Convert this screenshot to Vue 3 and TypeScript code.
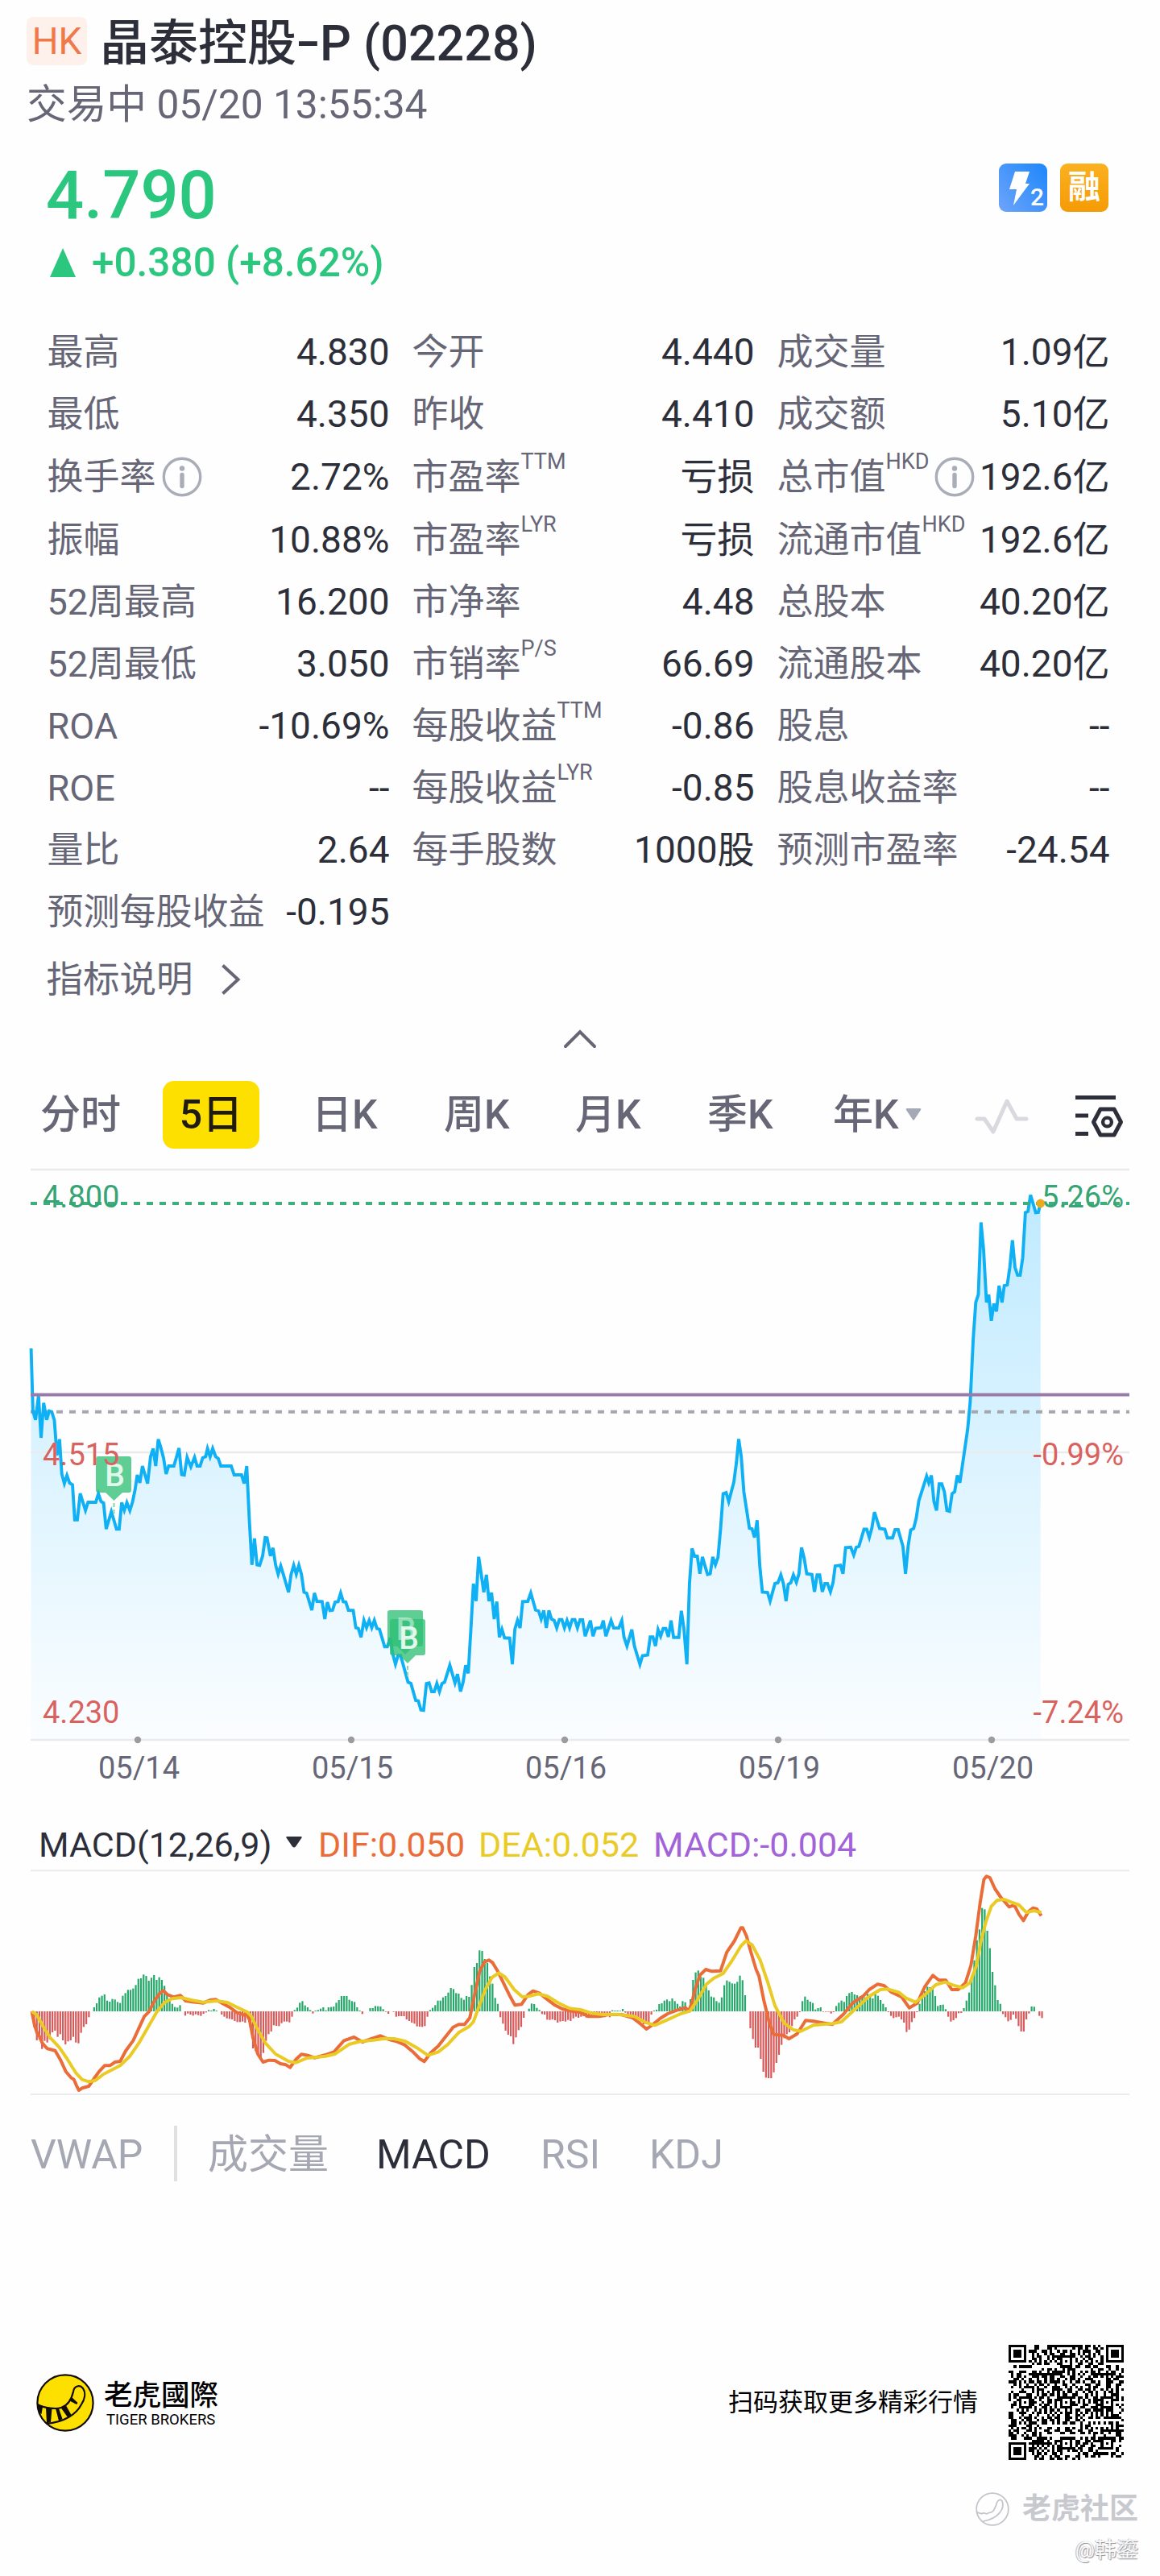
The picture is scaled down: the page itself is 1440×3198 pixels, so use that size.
<script setup lang="ts">
interface Stat { label: string; value: string; sup?: string; info?: boolean }

const stats: Stat[] = [
  { label: '最高', value: '4.830' }, { label: '今开', value: '4.440' }, { label: '成交量', value: '1.09亿' },
  { label: '最低', value: '4.350' }, { label: '昨收', value: '4.410' }, { label: '成交额', value: '5.10亿' },
  { label: '换手率', value: '2.72%', info: true }, { label: '市盈率', sup: 'TTM', value: '亏损' }, { label: '总市值', sup: 'HKD', info: true, value: '192.6亿' },
  { label: '振幅', value: '10.88%' }, { label: '市盈率', sup: 'LYR', value: '亏损' }, { label: '流通市值', sup: 'HKD', value: '192.6亿' },
  { label: '52周最高', value: '16.200' }, { label: '市净率', value: '4.48' }, { label: '总股本', value: '40.20亿' },
  { label: '52周最低', value: '3.050' }, { label: '市销率', sup: 'P/S', value: '66.69' }, { label: '流通股本', value: '40.20亿' },
  { label: 'ROA', value: '-10.69%' }, { label: '每股收益', sup: 'TTM', value: '-0.86' }, { label: '股息', value: '--' },
  { label: 'ROE', value: '--' }, { label: '每股收益', sup: 'LYR', value: '-0.85' }, { label: '股息收益率', value: '--' },
  { label: '量比', value: '2.64' }, { label: '每手股数', value: '1000股' }, { label: '预测市盈率', value: '-24.54' },
  { label: '预测每股收益', value: '-0.195' },
]

/* Intraday price series, split at the middle of the five-day window */
const firstHalf = '84,-258 89,-25 96,8 104,-82 111,75 118,-55 126,8 133,-25 140,-22 147,10 154,140 161,80 167,210 174,245 181,215 188,243 196,250 202,380 209,380 217,282 224,315 231,345 238,315 259,315 266,283 273,312 280,318 287,415 301,350 308,382 315,415 322,415 329,316 336,345 343,316 351,346 358,315 365,270 371,213 378,243 385,180 392,212 399,245 407,145 414,115 421,180 428,80 435,112 442,150 449,210 456,180 470,180 477,148 484,113 491,212 498,214 506,148 516,183 526,148 533,180 541,180 548,150 556,145 561,115 568,145 575,115 583,145 590,152 597,180 625,180 633,213 653,213 660,245 667,180 674,380 681,548 688,450 695,548 702,550 710,515 717,447 722,448 731,515 738,485 745,548 752,583 759,552 766,583 780,650 787,583 794,550 801,583 808,550 815,583 822,650 829,654 843,717 850,653 857,684 871,685 878,750 885,687 892,718 899,717 906,687 914,685 921,653 928,685 935,687 942,717 955,718 962,782 969,785 976,818 984,755 991,782 998,755 1005,782 1012,755 1019,785 1026,788 1040,853 1047,853 1055,820 1062,880 1069,918 1076,886 1083,886 1103,985 1111,990 1124,1053 1131,1055 1138,1088 1145,1090 1153,990 1160,988 1167,1020 1174,1020 1181,990 1188,1020 1195,990 1202,985 1216,922 1230,988 1237,955 1245,1020 1252,985 1259,922 1266,952 1273,790 1280,618 1287,683 1294,518 1301,583 1308,650 1315,585 1322,683 1329,652 1336,750 1343,685 1350,818 1357,788 1364,820 1378,821 1385,918 1392,787 1399,755 1406,783 1413,685 1427,684 1435,653 1448,716 1456,720 1463,750 1470,718 1477,783 1484,718 1491,750 1498,755 1505,783 1512,752 1519,752 1526,783 1533,755 1540,783 1547,752 1554,752 1561,783'
const secondHalf = '0,1178 7,1178 14,1220 28,1180 35,1220 42,1200 57,1198 63,1180 70,1220 84,1180 91,1199 105,1199 113,1180 119,1222 127,1245 140,1203 147,1245 162,1292 169,1270 183,1268 190,1222 197,1222 204,1245 211,1203 218,1220 225,1200 232,1200 239,1222 246,1180 253,1223 267,1223 274,1155 281,1200 289,1292 296,1085 303,995 310,1015 317,1015 324,1060 331,1017 338,1040 345,1062 352,1060 359,1017 366,1037 373,1018 380,945 387,855 395,852 402,875 409,850 416,825 423,775 429,715 436,760 443,850 458,943 465,945 472,967 479,923 486,1040 493,1107 507,1108 514,1130 527,1085 535,1083 543,1063 550,1085 557,1130 563,1087 570,1083 577,1063 585,1082 592,1060 599,993 606,1020 613,1060 627,1062 634,1106 641,1063 648,1063 655,1106 662,1085 669,1085 677,1106 684,1083 690,1040 704,1038 711,1060 718,993 732,992 740,1012 747,992 754,990 768,946 775,946 782,967 789,943 796,902 810,944 824,946 831,968 845,968 852,947 860,947 873,990 880,1060 887,990 894,948 902,944 909,917 916,873 937,810 943,827 950,808 957,875 964,898 971,830 978,830 985,850 992,898 999,900 1006,855 1013,850 1020,808 1027,827 1048,690 1055,620 1063,460 1070,365 1077,345 1084,160 1091,230 1099,365 1105,345 1112,412 1119,368 1126,388 1133,322 1141,365 1147,322 1155,320 1162,275 1169,206 1176,275 1183,295 1190,295 1197,250 1204,135 1211,132 1218,90 1225,112 1232,135 1239,134 1245,112'

type Pt = [number, number]
const parse = (s: string): Pt[] => s.split(' ').map((p) => p.split(',').map(Number) as Pt)
const UX = 2.1778
const pricePts: Pt[] = [
  ...parse(firstHalf).map(([x, y]): Pt => [x / UX, 1760 + y / 3]),
  ...parse(secondHalf).map(([x, y]): Pt => [720 + x / UX, 1440 + y / 2.0632]),
]
const fmt = (pts: Pt[]) => pts.map(([x, y]) => `${x.toFixed(1)},${y.toFixed(1)}`).join(' ')
const priceLine = fmt(pricePts)
const last = pricePts[pricePts.length - 1]
const priceArea = `38.5,2160 ${priceLine} ${last[0].toFixed(1)},2160`

const days = [['05/14', 171], ['05/15', 436], ['05/16', 701], ['05/19', 966], ['05/20', 1231]] as [string, number][]

/* MACD histogram, one entry per sample */
const hist = [
  0, -60, -108, -105, -140, -110, -116, -105, -78, -72, -95, -85, -108, -123, -112, -108, -95, -116, -119, -80, -58, -48, -22, 0, 15, 30, 52, 58, 63, 40,
  36, 46, 44, 35, 31, 58, 68, 80, 80, 85, 98, 121, 123, 137, 132, 114, 125, 135, 117, 127, 117, 95, 68, 45, 28, 16, 14, 23, 0, -16,
  -8, -12, -16, -11, -14, -17, -9, -4, 5, 3, 9, 3, 0, -12, -20, -26, -28, -30, -36, -40, -40, -38, -42, -25, -60, -138, -148, -165, -180, -155,
  -110, -85, -75, -52, -54, -55, -44, -38, -38, -41, -20, 5, 14, 32, 38, 22, 15, 5, -8, 3, 5, 10, 15, 4, 15, 16, 18, 32, 42, 57,
  57, 57, 43, 38, 35, 15, 3, -10, 0, 0, 12, 12, 20, 19, 18, 8, -2, -9, 0, -2, -20, -18, -18, -18, -30, -36, -42, -46, -56, -57,
  -58, -55, -20, 5, 13, 23, 40, 40, 52, 57, 70, 87, 83, 68, 66, 50, 43, 57, 54, 98, 165, 180, 227, 225, 195, 180, 130, 103, 50, 28,
  -22, -46, -72, -87, -93, -122, -97, -70, -58, -24, 0, 10, 29, 27, 13, 5, -10, -12, -31, -32, -30, -33, -42, -38, -36, -38, -32, -36, -26, -20,
  -24, -20, -18, -23, -20, -22, -22, -20, -18, -22, -22, -18, -22, 4, 3, 3, 2, 9, -5, -12, -15, -24, -28, -32, -38, -48, -48, -42, -12, 3,
  6, 27, 30, 40, 44, 38, 48, 38, 28, 18, 38, 34, 10, 45, 117, 145, 152, 128, 125, 100, 78, 55, 52, 38, 32, 52, 97, 115, 110, 104,
  103, 110, 133, 116, 60, 0, -63, -103, -135, -135, -177, -225, -247, -249, -249, -227, -192, -162, -125, -100, -85, -78, -55, -30, -20, -3, 38, 55, 43, 36,
  31, 7, 12, 15, -2, -2, -2, -8, -3, 20, 32, 40, 35, 57, 68, 72, 63, 60, 55, 60, 52, 65, 57, 48, 65, 58, 42, 28, 15, -3,
  -17, -25, -22, -20, -30, -42, -77, -68, -40, -25, -3, 28, 50, 75, 92, 90, 88, 57, 20, 24, 25, 8, -20, -38, -33, -25, -7, -6, 12, 40,
  70, 120, 190, 265, 305, 385, 380, 300, 235, 147, 97, 42, 28, -10, -22, -37, -32, -12, -27, -55, -75, -75, -30, -8, 18, 17, 0, -17, -25,
]
const bars = hist
  .map((v, i) => ({ x: (85.5 + 7.04 * i) / UX - 1.1, y: v > 0 ? 2497 - v / 3 : 2497, h: Math.abs(v) / 3, up: v > 0 }))
  .filter((b) => b.h > 0)

const difPts = '86,771 93,820 100,850 107,865 114,888 121,900 128,910 149,917 163,950 178,995 192,1018 200,1025 206,1045 213,1065 222,1057 240,1050 255,1020 268,995 283,973 297,973 311,960 325,957 340,918 360,880 375,835 390,790 403,772 417,733 431,705 442,694 452,708 470,718 488,712 502,732 520,736 550,740 568,729 583,727 600,740 620,755 640,775 660,785 667,780 675,805 684,870 697,930 711,960 727,953 743,954 758,966 773,970 784,980 800,950 815,931 832,935 850,944 878,934 903,922 930,880 957,867 980,885 1000,875 1028,862 1050,875 1070,882 1093,895 1115,920 1135,948 1147,958 1165,925 1185,900 1205,865 1225,830 1240,820 1256,820 1270,795 1283,710 1297,620 1310,587 1322,580 1332,590 1347,625 1362,668 1377,710 1392,748 1410,745 1427,710 1441,695 1458,703 1475,722 1500,748 1520,762 1545,770 1570,775 1590,790 1620,790 1645,783 1680,783 1710,795 1732,818 1748,837 1765,820 1785,797 1805,780 1830,767 1853,757 1862,770 1870,740 1880,685 1893,635 1908,615 1925,622 1948,620 1965,550 1985,510 2003,460 2008,460 2018,490 2030,550 2044,615 2052,640 2065,730 2080,815 2092,857 2118,860 2133,873 2155,855 2178,805 2200,808 2220,813 2250,820 2268,797 2280,782 2305,740 2333,715 2350,690 2372,670 2390,675 2410,700 2438,718 2458,758 2480,740 2500,680 2522,637 2538,655 2557,655 2573,690 2590,690 2610,665 2625,600 2638,490 2650,365 2660,280 2667,268 2676,273 2690,315 2705,345 2728,382 2742,375 2755,410 2767,433 2780,400 2793,386 2803,390 2815,415'
const deaPts = '86,771 100,785 118,830 135,868 160,905 180,945 205,1000 222,1025 240,1033 258,1028 280,1005 325,973 350,940 375,890 400,830 425,770 445,738 465,724 490,720 520,730 550,737 585,732 615,738 640,755 668,773 680,790 695,835 718,890 745,930 780,957 800,962 830,945 880,938 905,930 945,893 975,883 1010,878 1040,872 1065,873 1095,882 1125,905 1157,935 1185,922 1210,895 1240,850 1268,828 1280,810 1297,745 1312,690 1330,645 1348,628 1365,643 1390,690 1412,717 1430,715 1455,706 1480,715 1510,740 1540,760 1570,765 1600,778 1630,783 1670,782 1715,790 1745,812 1770,823 1800,805 1840,780 1865,770 1885,730 1910,670 1930,647 1955,630 1980,580 2003,528 2017,508 2033,523 2055,580 2075,660 2095,750 2120,815 2145,840 2165,845 2200,822 2250,817 2275,810 2310,765 2350,715 2380,690 2400,688 2430,700 2450,722 2475,737 2500,710 2530,672 2555,662 2580,675 2603,683 2622,665 2640,600 2652,510 2665,440 2680,380 2695,358 2715,354 2735,365 2755,375 2775,403 2795,396 2815,403'
const macdPath = (s: string) => fmt(parse(s).map(([x, y]): Pt => [x / UX, 2240 + y / 3]))
const dif = macdPath(difPts)
const dea = macdPath(deaPts)

/* QR symbol: 45 modules with finder, alignment and timing patterns */
const N = 45
const qr: boolean[][] = []
let seed = 20228
const rnd = () => { seed = (seed * 1103515245 + 12345) & 0x7fffffff; return (seed >> 12) & 1 }
for (let r = 0; r < N; r++) {
  qr.push([])
  for (let c = 0; c < N; c++) qr[r].push(r === 6 || c === 6 ? (r + c) % 2 === 0 : rnd() === 1)
}
const ring = (cr: number, cc: number, rad: number, light: number) => {
  for (let r = -rad; r <= rad; r++) for (let c = -rad; c <= rad; c++) {
    const row = cr + r, col = cc + c
    if (row < 0 || col < 0 || row >= N || col >= N) continue
    const d = Math.max(Math.abs(r), Math.abs(c))
    qr[row][col] = d !== light && d !== 4
  }
}
for (const [r, c] of [[6, 22], [22, 6], [22, 22], [22, 38], [38, 22], [38, 38]]) ring(r, c, 2, 1)
for (const [r, c] of [[3, 3], [3, 41], [41, 3]]) ring(r, c, 4, 2)
const qrPath = qr.map((row, r) => row.map((on, c) => (on ? `M${c} ${r}h1v1h-1z` : '')).join('')).join('')
</script>

<template>
  <main class="page">
    <header class="head">
      <div class="title-row"><span class="market">HK</span><h1>晶泰控股<span class="dash">-</span>P (02228)</h1></div>
      <p class="status">交易中 05/20 13:55:34</p>
    </header>

    <section class="quote">
      <div>
        <div class="price">4.790</div>
        <div class="change">
          <svg width="32" height="36" viewBox="0 0 32 36"><path d="M16 0L32 36H0z" fill="#2bc77f" /></svg>
          <span>+0.380 (+8.62%)</span>
        </div>
      </div>
      <div class="tags">
        <svg width="60" height="60" viewBox="0 0 60 60">
          <defs>
            <linearGradient id="lv" x1="0" y1="1" x2="1" y2="0.2"><stop offset="0" stop-color="#6ea4fb" /><stop offset="1" stop-color="#2489fb" /></linearGradient>
          </defs>
          <rect width="60" height="60" rx="9" fill="url(#lv)" />
          <path d="M20 10h18l-5 15h5L18 52l4-20h-9z" fill="#fff" />
          <text x="39" y="52" font-size="30" font-weight="500" fill="#fff">2</text>
        </svg>
        <span class="margin-tag">融</span>
      </div>
    </section>

    <section class="stats">
      <div v-for="(s, i) in stats" :key="i" class="stat">
        <span class="label">{{ s.label }}<span v-if="s.sup" class="sup">{{ s.sup }}</span></span>
        <svg v-if="s.info" class="info" width="50" height="50" viewBox="0 0 50 50">
          <circle cx="25" cy="25" r="22.7" fill="none" stroke="#a9adb8" stroke-width="3.4" />
          <circle cx="25" cy="14.5" r="3.2" fill="#a9adb8" />
          <path d="M25 22.5v14" stroke="#a9adb8" stroke-width="5.4" stroke-linecap="round" />
        </svg>
        <span class="value">{{ s.value }}</span>
      </div>
    </section>

    <div class="explain">
      <span>指标说明</span>
      <svg width="26" height="40" viewBox="0 0 26 40"><path d="M2.5 2.5L21.5 20L2.5 37.5" fill="none" stroke="#666677" stroke-width="4" /></svg>
    </div>
    <div class="fold">
      <svg width="44" height="26" viewBox="0 0 44 26"><path d="M4 22L22 4L40 22" fill="none" stroke="#666677" stroke-width="4" stroke-linecap="round" /></svg>
    </div>

    <nav class="periods">
      <span>分时</span>
      <span class="active">5日</span>
      <span>日K</span>
      <span>周K</span>
      <span>月K</span>
      <span>季K</span>
      <span class="year">年K<svg width="20" height="15" viewBox="0 0 20 15"><path d="M2 0h16q2 0 1 2l-8 12q-1 1-2 0l-8-12q-1-2 1-2z" fill="#a5a8b5" /></svg></span>
      <svg width="72" height="52" viewBox="0 0 72 52"><path d="M5 31H14L25 47L42 9L54 31H66" fill="none" stroke="#d9dadf" stroke-width="5" stroke-linecap="round" stroke-linejoin="round" /></svg>
      <svg class="tune" width="62" height="56" viewBox="0 0 62 56" fill="none" stroke="#2c2e3a" stroke-width="5">
        <path d="M1 4.6H51M1 27H17M1 49.6H17" />
        <path d="M32 19H49L57.5 35L49 51H32L23.5 35z" stroke-linejoin="round" />
        <circle cx="40.5" cy="35" r="5.4" stroke-width="4.4" />
      </svg>
    </nav>

    <svg class="chart" width="1440" height="780" viewBox="0 1450 1440 780">
      <defs>
        <linearGradient id="area" gradientUnits="userSpaceOnUse" x1="0" y1="1480" x2="0" y2="2160">
          <stop offset="0" stop-color="#bfeaff" /><stop offset="1" stop-color="#fafdff" />
        </linearGradient>
      </defs>
      <polygon :points="priceArea" fill="url(#area)" />
      <g stroke="#ebebed" stroke-width="2.4"><path d="M38 1452H1402M38 1803H1402M38 2160H1402" /></g>
      <path d="M38 1752.7H1402" stroke="#a6a6ae" stroke-width="4" stroke-dasharray="8 8" />
      <polyline :points="priceLine" fill="none" stroke="#0fb1f4" stroke-width="3.9" />
      <path d="M38 1494H1402" stroke="#3fae7d" stroke-width="4" stroke-dasharray="8 8" />
      <path d="M38 1731.4H1402" stroke="#987ba9" stroke-width="4" />
      <circle :cx="last[0]" cy="1494" r="5.4" fill="#e9ab1c" />
      <g fill="#2dbf74" fill-opacity=".76">
        <path d="M122 1808h38q3 0 3 3v39q0 3-3 3h-8l-10.500 10-10.500-10h-9q-3 0-3-3v-39q0-3 3-3z" />
        <path d="M484 1999h38q3 0 3 3v39q0 3-3 3h-9l-10 10-10-10h-9q-3 0-3-3v-39q0-3 3-3z" />
        <path d="M487 2010h38q3 0 3 3v39q0 3-3 3h-9l-10 10-10-10h-9q-3 0-3-3v-39q0-3 3-3z" />
      </g>
      <path d="M141.500 1866v14M506 2068v14" stroke="#7fd6a6" stroke-width="2" stroke-dasharray="5 3" />
      <g class="flag" text-anchor="middle">
        <text x="142.500" y="1845">B</text>
        <text x="504" y="2036" fill-opacity=".55">B</text>
        <text x="507.500" y="2047">B</text>
      </g>
      <g class="axis">
        <text x="53" y="1499" class="up">4.800</text>
        <text x="53" y="1819" class="down">4.515</text>
        <text x="53" y="2139" class="down">4.230</text>
        <g text-anchor="end">
          <text x="1395" y="1499" class="up">5.26%</text>
          <text x="1395" y="1819" class="down">-0.99%</text>
          <text x="1395" y="2139" class="down">-7.24%</text>
        </g>
        <g v-for="d in days" :key="d[0]" text-anchor="middle">
          <circle :cx="d[1]" cy="2160" r="4.200" fill="#9c9c9c" />
          <text :x="d[1] + 1.500" y="2208" class="day">{{ d[0] }}</text>
        </g>
      </g>
    </svg>

    <div class="legend">
      <span>MACD(12,26,9)</span>
      <svg width="20" height="14" viewBox="0 0 20 14"><path d="M1 0h18q1 0 0.500 1.500L12 12.500q-2 2-4 0L0.500 1.500Q0 0 1 0z" fill="#2c2e3a" /></svg>
      <span class="dif">DIF:0.050</span>
      <span class="dea">DEA:0.052</span>
      <span class="macd">MACD:-0.004</span>
    </div>

    <svg class="chart" width="1440" height="282" viewBox="0 2320 1440 282">
      <path d="M38 2322.300H1402M38 2600H1402" stroke="#ebebed" stroke-width="2" />
      <rect v-for="(b, i) in bars" :key="i" :x="b.x" :y="b.y" width="2.200" :height="b.h" :fill="b.up ? '#25a86a' : '#d95a5a'" />
      <g fill="none" stroke-width="4" stroke-linejoin="round">
        <polyline :points="dif" stroke="#ea6c38" />
        <polyline :points="dea" stroke="#eacb25" />
      </g>
    </svg>

    <nav class="indicators">
      <span>VWAP</span>
      <i class="bar"></i>
      <span>成交量</span>
      <span class="on">MACD</span>
      <span>RSI</span>
      <span>KDJ</span>
    </nav>

    <footer class="foot">
      <svg width="72" height="72" viewBox="0 0 72 72">
        <circle cx="36" cy="36" r="34.600" fill="#fee000" stroke="#120c08" stroke-width="2.200" />
        <path d="M1.500 38C10 43 25 44 31 42C40 39 44 31 46 22C47 15 54 13 58 18C62 24 60 32 56 38C50 50 35 60 12.500 62" fill="none" stroke="#120c08" stroke-width="2.200" />
        <path d="M1.500 38L8 41L6.500 50L3 48zM12 42L19.500 43L18 60L13 61.500zM24 43L28 43L32.500 56L28 58.500zM30.500 42L36.500 38.500L43.500 51L39 54zM40.500 33L43.500 28.500L51.500 36L50 38z" fill="#120c08" />
      </svg>
      <div class="brand"><div class="cn">老虎國際</div><div class="en">TIGER BROKERS</div></div>
      <p>扫码获取更多精彩行情</p>
      <svg width="143" height="143" viewBox="0 0 45 45" shape-rendering="crispEdges"><path :d="qrPath" fill="#000" /></svg>
    </footer>

    <div class="watermark">
      <div class="community">
        <svg width="42" height="42" viewBox="0 0 72 72" fill="none" stroke="#c3c4c9" stroke-width="3">
          <circle cx="36" cy="36" r="34" />
          <path d="M3 42C8 46 10 44 13 46C18 42 22 46 24 46C29 42 33 44 35 42C42 38 40 32 43 30C46 15 54 13 57 20C62 34 50 56 16 62" />
        </svg>
        <span>老虎社区</span>
      </div>
      <div class="author">@韩鎏</div>
    </div>
  </main>
</template>

<style>
body { margin: 0; background: #fefefe; }
</style>

<style scoped>
.page { width: 1440px; height: 3198px; overflow: hidden; background: #fefefe; color: #2c2e3a; font-family: Roboto, "Noto Sans CJK SC", sans-serif; }
h1, p { margin: 0; }
svg { display: block; flex: none; }
.head { height: 180px; padding: 21px 0 0 33px; box-sizing: border-box; }
.title-row { display: flex; }
.market { width: 75px; height: 60px; line-height: 61px; border-radius: 8px; background: #fef1ec; color: #f0794a; font-size: 46px; text-align: center; }
h1 { margin: 3px 0 0 16px; font-size: 61px; line-height: 60px; font-weight: 500; white-space: nowrap; }
.dash { display: inline-block; width: 29px; text-align: center; transform: translateY(-2px) scaleX(1.45); }
.status { margin-top: 16px; font-size: 49.700px; line-height: 60px; color: #666677; }
.quote { height: 219px; padding: 0 64px 0 57px; display: flex; justify-content: space-between; }
.price { margin-top: 20px; height: 86px; line-height: 86px; font-size: 83px; font-weight: 500; color: #2bc77f; }
.change { margin-top: 10px; height: 60px; display: flex; align-items: center; gap: 20px; padding-left: 5px; font-size: 49.500px; font-weight: 500; line-height: 60px; color: #2bc77f; }
.tags { display: flex; gap: 16px; margin-top: 23px; }
.margin-tag { width: 60px; height: 60px; border-radius: 9px; background: linear-gradient(#fbb120, #f59b05); color: #fff; font-size: 40px; font-weight: 700; line-height: 60px; text-align: center; }
.stats { display: grid; grid-template-columns: 425px 425px 414px; column-gap: 28px; padding-left: 58.500px; }
.stat { min-height: 77px; display: flex; align-items: center; font-size: 46px; line-height: 77px; white-space: nowrap; }
.stat:nth-child(7), .stat:nth-child(8), .stat:nth-child(9) { min-height: 79px; }
.stat:nth-child(3n) .value { margin-right: 1px; }
.label { color: #666677; font-size: 45px; }
.sup { font-size: 27px; line-height: 0; vertical-align: 26px; }
.info { margin-left: 7px; margin-top: -2px; }
.value { margin-left: auto; }
.explain { height: 92px; padding-left: 57.500px; display: flex; align-items: center; gap: 34px; font-size: 45.500px; line-height: 92px; color: #666677; }
.explain span { height: 92px; line-height: 91px; }
.explain svg { margin-top: -3px; }
.fold { height: 54px; display: flex; align-items: center; justify-content: center; }
.periods { height: 133px; padding-left: 50px; display: grid; grid-template-columns: 152px 185px 164px 163px 164px 156px 174px 126px auto; align-items: center; font-size: 50px; line-height: 84px; font-weight: 500; color: #666677; white-space: nowrap; }
.periods span { height: 84px; }
.periods .active { width: 120px; border-radius: 14px; background: #fee000; color: #1f1b10; text-align: center; }
.year { display: flex; align-items: center; gap: 8px; }
.tune { margin-top: 4px; }
.flag { font-size: 39px; font-weight: 500; fill: #e2f8ec; }
.axis { font-size: 38px; }
.up { fill: #36a474; }
.down { fill: #d9625f; }
.day { fill: #666677; }
.legend { height: 90px; box-sizing: border-box; padding: 20px 0 0 48px; display: grid; grid-template-columns: 307px 40px 199px 217px auto; align-items: start; font-size: 43px; line-height: 80px; white-space: nowrap; }
.legend svg { margin-top: 30px; }
.dif { color: #ea6c38; }
.dea { color: #eacb25; }
.macd { color: #a262d8; }
.indicators { height: 146px; padding-left: 38px; display: grid; grid-template-columns: 178px 42px 209px 204px 135px auto; align-items: center; font-size: 50px; line-height: 80px; color: #a5a8b2; }
.indicators span { height: 80px; }
.bar { width: 4px; height: 69px; background: #e0e0e2; margin-top: -4px; }
.on { color: #2c2e3a; }
.foot { margin-top: 163px; height: 143px; padding: 0 45px; display: flex; align-items: center; color: #000; }
.brand { margin-left: 12px; }
.cn { font: 500 35.500px/40px "Noto Sans CJK TC", sans-serif; }
.en { margin: 2px 0 0 3px; font-size: 18.500px; line-height: 22px; white-space: nowrap; }
.foot p { margin: 0 38px 0 auto; font-size: 31px; line-height: 40px; }
.watermark { padding: 37px 27px 0 0; display: flex; flex-direction: column; align-items: flex-end; }
.community { display: flex; align-items: center; gap: 16px; font-size: 36px; font-weight: 700; line-height: 48px; color: #c8c9ce; }
.author { margin-top: 11px; font-size: 27px; line-height: 32px; color: #fafafa; text-shadow: 1px 1px 1px #8e8f96, -1px 0 1px #b5b5ba; }
</style>
